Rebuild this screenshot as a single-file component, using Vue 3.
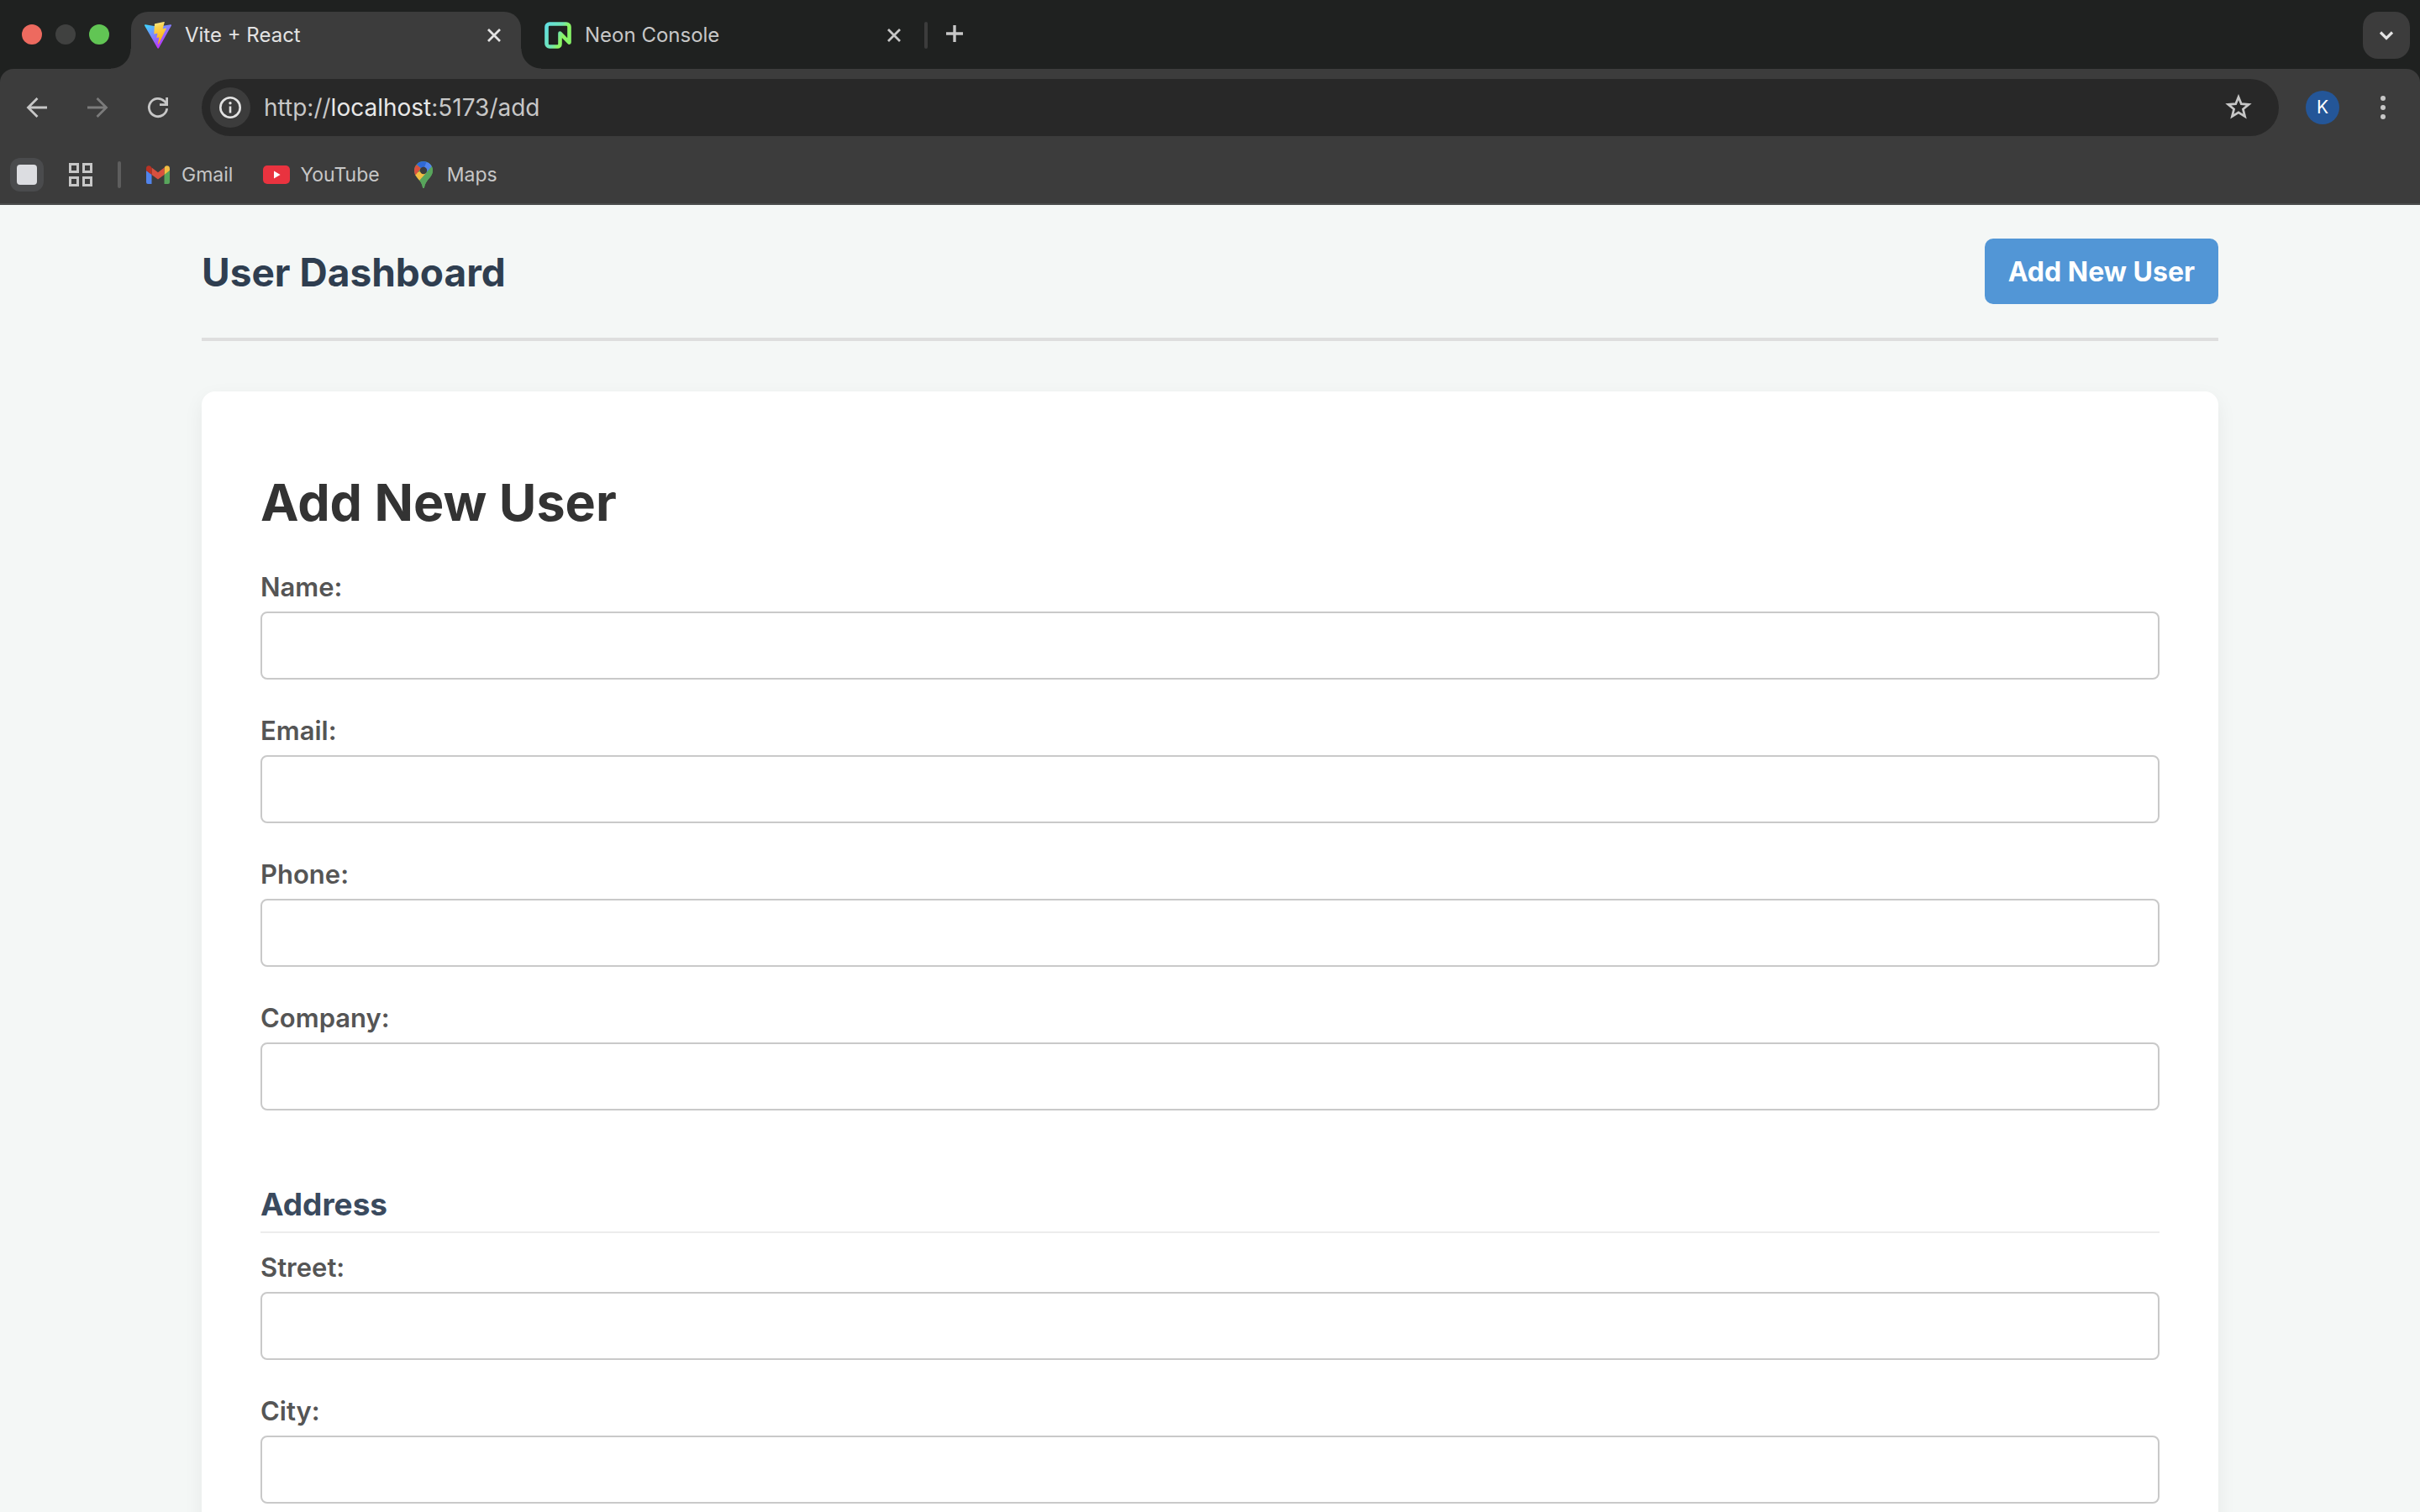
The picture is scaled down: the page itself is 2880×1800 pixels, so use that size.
<script setup>
import { reactive } from 'vue'

const fields = [
  { key: 'name', label: 'Name:', type: 'text' },
  { key: 'email', label: 'Email:', type: 'email' },
  { key: 'phone', label: 'Phone:', type: 'text' },
  { key: 'company', label: 'Company:', type: 'text' },
]
const addressFields = [
  { key: 'street', label: 'Street:', type: 'text' },
  { key: 'city', label: 'City:', type: 'text' },
]
const user = reactive({ name: '', email: '', phone: '', company: '', street: '', city: '' })
</script>

<template>
  <div class="window">
    <header class="browser">
      <div class="tabstrip">
        <div class="lights">
          <span class="light red"></span>
          <span class="light grey"></span>
          <span class="light green"></span>
        </div>

        <div class="tab active">
          <svg class="favicon" viewBox="0 0 32 32">
            <defs>
              <linearGradient id="vite-body" x1="0" y1="0.1" x2="0.6" y2="0.9">
                <stop offset="0" stop-color="#41d1ff" />
                <stop offset="1" stop-color="#bd34fe" />
              </linearGradient>
              <linearGradient id="vite-bolt" x1="0.4" y1="0" x2="0.6" y2="1">
                <stop offset="0" stop-color="#ffea83" />
                <stop offset="0.2" stop-color="#fbd450" />
                <stop offset="1" stop-color="#ffa800" />
              </linearGradient>
            </defs>
            <path d="M31.9 4.5 17 31.2a.9.9 0 0 1-1.6 0L.1 4.5a.9.9 0 0 1 .9-1.3l15 2.6 15-2.6a.9.9 0 0 1 .9 1.3z" fill="url(#vite-body)" />
            <path d="M23.2.1 12.3 2.2a.4.4 0 0 0-.3.4l-.7 11.4a.4.4 0 0 0 .5.4l3.1-.7a.4.4 0 0 1 .5.5l-.9 4.4a.4.4 0 0 0 .5.5l1.9-.6a.4.4 0 0 1 .5.5l-1.4 7c-.1.4.5.7.7.3l.2-.3 8.9-17.8a.4.4 0 0 0-.4-.6l-3.2.6a.4.4 0 0 1-.4-.5l2-7.1a.4.4 0 0 0-.3-.5z" fill="url(#vite-bolt)" />
          </svg>
          <span class="tab-title">Vite + React</span>
          <button class="tab-close" aria-label="Close tab">
            <svg viewBox="0 0 32 32"><path d="M9 9l14 14M23 9 9 23" fill="none" stroke="currentColor" stroke-width="2.8" /></svg>
          </button>
        </div>

        <div class="tab">
          <svg class="favicon" viewBox="0 0 32 32">
            <defs>
              <linearGradient id="neon-line" x1="0" y1="0" x2="1" y2="0.5">
                <stop offset="0" stop-color="#62dfe0" />
                <stop offset="0.55" stop-color="#70e5b4" />
                <stop offset="0.8" stop-color="#8cf562" />
                <stop offset="1" stop-color="#86f468" />
              </linearGradient>
            </defs>
            <path d="M29.5 24.5V6A3.5 3.5 0 0 0 26 2.5H6A3.5 3.5 0 0 0 2.5 6v20A3.5 3.5 0 0 0 6 29.5h9.5a3 3 0 0 0 3-3v-13l10.7 11" fill="none" stroke="url(#neon-line)" stroke-width="4.6" stroke-linejoin="round" stroke-linecap="round" />
          </svg>
          <span class="tab-title">Neon Console</span>
          <button class="tab-close" aria-label="Close tab">
            <svg viewBox="0 0 32 32"><path d="M9 9l14 14M23 9 9 23" fill="none" stroke="currentColor" stroke-width="2.8" /></svg>
          </button>
        </div>

        <span class="tab-divider"></span>
        <button class="new-tab" aria-label="New tab">
          <svg viewBox="0 0 32 32"><path d="M16 6v20M6 16h20" fill="none" stroke="currentColor" stroke-width="3.4" /></svg>
        </button>
        <button class="tab-search" aria-label="Search tabs">
          <svg viewBox="0 0 32 32"><path d="m9 12.5 7 7 7-7" fill="none" stroke="currentColor" stroke-width="3.2" /></svg>
        </button>
      </div>

      <div class="toolbar">
        <nav class="nav">
          <button class="tool" aria-label="Back">
            <svg viewBox="0 0 32 32"><path d="M28 16H6M16.5 5l-11 11 11 11" fill="none" stroke="currentColor" stroke-width="2.8" /></svg>
          </button>
          <button class="tool dim" aria-label="Forward">
            <svg viewBox="0 0 32 32"><path d="M4 16h22M15.5 5l11 11-11 11" fill="none" stroke="currentColor" stroke-width="2.8" /></svg>
          </button>
          <button class="tool" aria-label="Reload">
            <svg viewBox="0 0 32 32"><path d="M26.7 17.2A10.7 10.7 0 1 1 23.6 8.4l2.9 3.1M26.6 4v8.6H18" fill="none" stroke="currentColor" stroke-width="2.8" /></svg>
          </button>
        </nav>
        <div class="omnibox">
          <button class="site-info" aria-label="View site information">
            <svg viewBox="0 0 32 32"><circle cx="16" cy="16" r="11.7" fill="none" stroke="currentColor" stroke-width="2.6" /><path d="M16 14.5v8" stroke="currentColor" stroke-width="2.6" /><circle cx="16" cy="10.8" r="1.7" fill="currentColor" /></svg>
          </button>
          <div class="url" role="textbox" aria-label="Address bar">http://<span class="host">localhost</span>:5173/add</div>
          <button class="tool star" aria-label="Bookmark this tab">
            <svg viewBox="0 0 32 32"><path d="m16 3.5 3.3 8.2 8.9.6-6.8 5.6 2.2 8.700-7.600-4.800-7.600 4.800 2.200-8.700-6.800-5.600 8.900-.6z" fill="none" stroke="currentColor" stroke-width="2.7" /></svg>
          </button>
        </div>
        <div class="actions">
          <button class="profile" aria-label="Profile"><span class="avatar">K</span></button>
          <button class="tool" aria-label="Menu">
            <svg viewBox="0 0 32 32"><g fill="currentColor"><circle cx="16" cy="5" r="3" /><circle cx="16" cy="16" r="3" /><circle cx="16" cy="27" r="3" /></g></svg>
          </button>
        </div>
      </div>

      <div class="bookmarks">
        <button class="group" aria-label="Tab group"><span></span></button>
        <button class="apps" aria-label="Apps">
          <svg viewBox="0 0 28 28"><path d="M1.5 1.5h9v9h-9zM17.5 1.5h9v9h-9zM1.5 17.5h9v9h-9zM17.5 17.5h9v9h-9z" fill="none" stroke="currentColor" stroke-width="3" /></svg>
        </button>
        <span class="bar-divider"></span>
        <div class="links">
          <a class="bookmark" href="#">
            <svg viewBox="0 0 32 32">
              <path d="M2 11v14a2 2 0 0 0 2 2h4.500V15.500z" fill="#5184ec" />
              <path d="M23.500 27H28a2 2 0 0 0 2-2V11l-6.500 4.500z" fill="#58a55c" />
              <path d="M23.500 8v8L30 11V8.500c0-3.200-3.300-4.200-5.500-2.500z" fill="#f3bd42" />
              <path d="M8.500 16V7.500L16 13.200l7.500-5.700V16L16 21.500z" fill="#d9503f" />
              <path d="M2 8.500V11l6.500 5V8l-1-1.800C5.300 4.400 2 5.400 2 8.500z" fill="#b93224" />
            </svg>
            <span>Gmail</span>
          </a>
          <a class="bookmark" href="#">
            <svg viewBox="0 0 32 32"><rect y="5" width="32" height="22" rx="5" fill="#e9333f" /><path d="M13 11.6v8.800l7.600-4.400z" fill="#fff" /></svg>
            <span>YouTube</span>
          </a>
          <a class="bookmark" href="#">
            <svg viewBox="0 0 32 32">
              <defs>
                <clipPath id="pin"><path d="M16 0A11 11 0 0 0 5 11c0 8.500 8.500 10.500 10 20a1 1 0 0 0 2 0c1.500-9.500 10-11.500 10-20A11 11 0 0 0 16 0z" /></clipPath>
              </defs>
              <g clip-path="url(#pin)">
                <path d="M0 0h32v32H0z" fill="#58a55c" />
                <path d="M6 2 16 11l7.500-9L16-1z" fill="#3069d6" />
                <path d="M19.500 1 15 12l-4.500 11L28 4z" fill="#5184ec" />
                <path d="M28 4 9.500 24.500V34H30z" fill="#58a55c" />
                <path d="M4 17.500 7.500 13.500 16 11l3 3-9.800 11z" fill="#f3bd42" />
                <path d="M8 4.200 13 8.500 7.200 15.500 3 19V6z" fill="#d9503f" />
              </g>
              <circle cx="16" cy="11" r="4.200" fill="#3c3c3c" />
            </svg>
            <span>Maps</span>
          </a>
        </div>
      </div>
    </header>

    <div class="page">
      <div class="container">
        <header class="page-header">
          <h1>User Dashboard</h1>
          <button class="add-user" type="button">Add New User</button>
        </header>

        <main class="card">
          <h2>Add New User</h2>
          <form @submit.prevent>
            <div v-for="f in fields" :key="f.key" class="field">
              <label :for="f.key">{{ f.label }}</label>
              <input :id="f.key" v-model="user[f.key]" :type="f.type" />
            </div>
            <h3>Address</h3>
            <div v-for="f in addressFields" :key="f.key" class="field">
              <label :for="f.key">{{ f.label }}</label>
              <input :id="f.key" v-model="user[f.key]" :type="f.type" />
            </div>
          </form>
        </main>
      </div>
    </div>
  </div>
</template>

<style>
body {
  background: #f4f7f6;
}
</style>

<style scoped>
* {
  box-sizing: border-box;
}
.window {
  display: flex;
  flex-direction: column;
  height: 100vh;
  overflow: hidden;
  font-family: Inter, "Liberation Sans", sans-serif;
}
button {
  padding: 0;
  border: 0;
  background: none;
  color: inherit;
  font: inherit;
}
svg {
  display: block;
  flex: none;
  width: 32px;
  height: 32px;
}

/* Browser chrome */
.browser {
  flex: none;
  background: #1f2120;
  color: #c7c7c7;
  font-size: 24px;
}
.tabstrip {
  display: flex;
  height: 82px;
  padding: 14px 12px 0 26px;
}
.lights {
  display: flex;
  gap: 16px;
  width: 130px;
  padding-top: 15px;
}
.light {
  width: 24px;
  height: 24px;
  border-radius: 50%;
}
.red {
  background: #ed6a5f;
}
.grey {
  background: #404140;
}
.green {
  background: #61c554;
}
.tab {
  position: relative;
  display: flex;
  align-items: center;
  width: 464px;
  height: 68px;
  margin-right: 12px;
  padding: 0 16px 12px;
}
.tab.active {
  border-radius: 20px 20px 0 0;
  background: #3c3c3c;
  color: #e3e3e3;
}
.tab.active::before,
.tab.active::after {
  content: "";
  position: absolute;
  bottom: 0;
  width: 24px;
  height: 24px;
}
.tab.active::before {
  right: 100%;
  background: radial-gradient(circle at 0 0, transparent 23px, #3c3c3c 24px);
}
.tab.active::after {
  left: 100%;
  background: radial-gradient(circle at 100% 0, transparent 23px, #3c3c3c 24px);
}
.tab-title {
  flex: 1;
  margin-left: 16px;
  line-height: 28px;
}
.tab-divider {
  width: 4px;
  height: 32px;
  margin: 12px 4px 0 -8px;
  border-radius: 2px;
  background: #3c3c3c;
}
.new-tab {
  display: flex;
  align-items: center;
  justify-content: center;
  width: 56px;
  height: 52px;
}
.tab-search {
  display: flex;
  align-items: center;
  justify-content: center;
  width: 56px;
  height: 56px;
  margin-left: auto;
  border-radius: 18px;
  background: #3c3c3c;
  color: #e3e3e3;
}
.toolbar {
  display: flex;
  align-items: center;
  gap: 24px;
  padding: 12px 16px 0;
  border-radius: 16px 16px 0 0;
  background: #3c3c3c;
}
.nav,
.actions {
  display: flex;
  gap: 16px;
}
.tool,
.profile {
  display: flex;
  align-items: center;
  justify-content: center;
  width: 56px;
  height: 56px;
}
.dim {
  color: #7b7b7b;
}
.omnibox {
  display: flex;
  flex: 1;
  align-items: center;
  height: 68px;
  padding: 0 20px 0 10px;
  border-radius: 34px;
  background: #282828;
}
.site-info {
  display: flex;
  align-items: center;
  justify-content: center;
  width: 48px;
  height: 48px;
  border-radius: 50%;
  background: #3c3c3c;
  color: #e3e3e3;
}
.url {
  flex: 1;
  margin-left: 16px;
  font-size: 28px;
}
.host {
  color: #e8e8e8;
}
.avatar {
  width: 40px;
  height: 40px;
  border-radius: 50%;
  background: #245698;
  color: #fff;
  font-size: 21px;
  line-height: 40px;
  text-align: center;
}
.bookmarks {
  display: flex;
  align-items: center;
  height: 82px;
  padding: 12px 12px 0;
  border-bottom: 2px solid #4a4c4c;
  background: #3c3c3c;
}
.group {
  display: flex;
  align-items: center;
  justify-content: center;
  width: 40px;
  height: 40px;
  border-radius: 12px;
  background: #4a4b4d;
}
.group span {
  width: 24px;
  height: 24px;
  border-radius: 4px;
  background: #dcdde1;
}
.apps {
  margin: 0 30px;
}
.apps svg {
  width: 28px;
  height: 28px;
}
.bar-divider {
  width: 4px;
  height: 32px;
  border-radius: 2px;
  background: #5e5e5e;
}
.links {
  display: flex;
  gap: 36px;
  margin-left: 28px;
  font-size: 23px;
}
.bookmark {
  display: flex;
  align-items: center;
  gap: 12px;
  color: inherit;
  text-decoration: none;
}

/* Page */
.page {
  flex: 1;
  padding: 40px;
  background: #f4f7f6;
}
.container {
  max-width: 2400px;
  margin: 0 auto;
}
.page-header {
  display: flex;
  align-items: center;
  justify-content: space-between;
  margin-bottom: 60px;
  padding-bottom: 40px;
  border-bottom: 4px solid #dedede;
}
h1 {
  margin: 0;
  padding-top: 2px;
  color: #2f3e50;
  font-size: 46px;
  font-weight: 700;
  line-height: 76px;
}
.add-user {
  padding: 21px 28px 19px;
  border-radius: 10px;
  background: #5296d6;
  color: #fff;
  font-size: 32px;
  font-weight: 700;
  line-height: 38px;
}
.card {
  padding: 94px 70px 70px;
  border-radius: 16px;
  background: #fff;
  box-shadow: 0 8px 24px rgba(0, 0, 0, 0.06);
}
h2 {
  margin: 0 0 42px;
  color: #333;
  font-size: 61px;
  font-weight: 700;
  line-height: 76px;
}
.field {
  display: flex;
  flex-direction: column;
  gap: 10px;
  margin-bottom: 40px;
}
label {
  align-self: flex-start;
  padding-top: 2px;
  color: #555;
  font-size: 31px;
  font-weight: 600;
  line-height: 38px;
}
input {
  width: 100%;
  height: 81px;
  padding: 0 20px;
  border: 2px solid #c9c9c9;
  border-radius: 8px;
  background: #fff;
  color: #333;
  font: inherit;
  font-size: 31px;
}
h3 {
  margin: 90px 0 20px;
  padding-bottom: 10px;
  border-bottom: 2px solid #ececec;
  color: #3a4a5e;
  font-size: 37px;
  font-weight: 700;
  line-height: 44px;
}
</style>
